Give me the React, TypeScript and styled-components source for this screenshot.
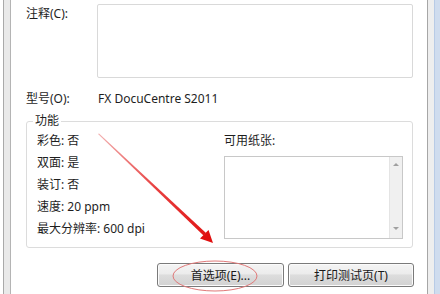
import React from "react";
import styled, { createGlobalStyle } from "styled-components";

const Global = createGlobalStyle`
  html, body { margin: 0; padding: 0; background: #ffffff; }
  body { font-family: "Noto Sans", "Noto Sans CJK SC", sans-serif; font-size: 12px; color: #1e1e1e; }
`;

const Page = styled.div`
  position: relative;
  width: 440px;
  height: 294px;
  overflow: hidden;
  display: flex;
  background: #ffffff;
`;

const LeftFrame = styled.div`
  width: 6px;
  margin-left: 3px;
  border-left: 1px solid #a9a9a9;
  border-right: 1px solid #b4b4b4;
  background: #e9e9e9;
`;

const RightFrame = styled.div`
  width: 12px;
  display: flex;
  border-left: 1px solid #a6a6a6;
`;

const RightInner = styled.div`
  width: 6px;
  background: #eeeeee;
`;

const RightBlue = styled.div`
  flex: 1;
  background: #cfdcee;
  border-left: 1px solid #b8cbe6;
`;

const Content = styled.div`
  flex: 1;
  padding: 4px 14px 0 15px;
  display: flex;
  flex-direction: column;
`;

const FieldRow = styled.div<{ $align?: string }>`
  display: grid;
  grid-template-columns: 71px 1fr;
  align-items: ${(p) => p.$align || "center"};
`;

const Label = styled.div<{ $top?: number }>`
  padding-top: ${(p) => p.$top ?? 0}px;
  white-space: nowrap;
  line-height: 18px;
`;

const TextArea = styled.div`
  height: 72px;
  border: 1px solid #d9d9d9;
  border-radius: 2px;
  background: #ffffff;
`;

const ModelRow = styled(FieldRow)`
  margin-top: 12px;
  height: 18px;
`;

const Value = styled.div`
  padding-left: 1px;
  line-height: 18px;
  white-space: nowrap;
`;

const Group = styled.div`
  position: relative;
  margin-top: 13px;
  padding: 8px 9px 0 10px;
  height: 127px;
  box-sizing: border-box;
  border: 1px solid #dcdcdc;
  border-radius: 3px;
  display: grid;
  grid-template-columns: 187px 1fr;
  align-items: start;
`;

const Legend = styled.div`
  position: absolute;
  top: -8px;
  left: 6px;
  padding: 0 2px;
  line-height: 14px;
  background: #ffffff;
`;

const InfoList = styled.div`
  display: flex;
  flex-direction: column;
`;

const InfoItem = styled.div`
  line-height: 22px;
  white-space: nowrap;
`;

const PaperCol = styled.div`
  display: flex;
  flex-direction: column;
`;

const PaperLabel = styled.div`
  line-height: 22px;
`;

const ListBox = styled.div`
  margin-top: 4px;
  height: 83px;
  box-sizing: border-box;
  border: 1px solid #c8c8c8;
  display: flex;
  justify-content: flex-end;
  background: #ffffff;
`;

const ScrollBar = styled.div`
  width: 13px;
  background: #f0f0f0;
  border-left: 1px solid #e4e4e4;
  display: flex;
  flex-direction: column;
  justify-content: space-between;
  align-items: center;
  padding: 6px 0 8px;
  box-sizing: border-box;
`;

const Arrow = styled.div<{ $down?: boolean }>`
  width: 0;
  height: 0;
  border-left: 3px solid transparent;
  border-right: 3px solid transparent;
  ${(p) =>
    p.$down
      ? "border-top: 3px solid #a0a0a0;"
      : "border-bottom: 3px solid #a0a0a0;"}
`;

const ButtonRow = styled.div`
  display: flex;
  justify-content: flex-end;
  gap: 4px;
  margin-top: 15px;
  margin-right: -1px;
`;

const Button = styled.div<{ $w: number }>`
  width: ${(p) => p.$w}px;
  height: 24px;
  box-sizing: border-box;
  border: 1px solid #7a7a7a;
  border-radius: 3px;
  background: linear-gradient(#f4f4f4 0%, #ececec 45%, #dddddd 50%, #d2d2d2 100%);
  box-shadow: inset 0 0 0 1px #fbfbfb;
  display: flex;
  align-items: center;
  justify-content: center;
  white-space: nowrap;
  color: #1a1a1a;
`;

const Overlay = styled.svg`
  position: absolute;
  left: 0;
  top: 0;
  pointer-events: none;
`;

export default function App() {
  return (
    <>
      <Global />
      <Page>
        <LeftFrame />
        <Content>
          <FieldRow $align="start">
            <Label $top={1}>注释(C):</Label>
            <TextArea />
          </FieldRow>
          <ModelRow>
            <Label>型号(O):</Label>
            <Value>FX DocuCentre S2011</Value>
          </ModelRow>
          <Group>
            <Legend>功能</Legend>
            <InfoList>
              <InfoItem>彩色: 否</InfoItem>
              <InfoItem>双面: 是</InfoItem>
              <InfoItem>装订: 否</InfoItem>
              <InfoItem>速度: 20 ppm</InfoItem>
              <InfoItem>最大分辨率: 600 dpi</InfoItem>
            </InfoList>
            <PaperCol>
              <PaperLabel>可用纸张:</PaperLabel>
              <ListBox>
                <ScrollBar>
                  <Arrow />
                  <Arrow $down />
                </ScrollBar>
              </ListBox>
            </PaperCol>
          </Group>
          <ButtonRow>
            <Button $w={127}>首选项(E)...</Button>
            <Button $w={126}>打印测试页(T)</Button>
          </ButtonRow>
        </Content>
        <RightFrame>
          <RightInner />
          <RightBlue />
        </RightFrame>
        <Overlay width="440" height="294" viewBox="0 0 440 294">
          <defs>
            <linearGradient id="ag" x1="98" y1="134" x2="212" y2="242" gradientUnits="userSpaceOnUse">
              <stop offset="0" stopColor="#f2b0b0" />
              <stop offset="0.5" stopColor="#e84040" />
              <stop offset="1" stopColor="#e01010" />
            </linearGradient>
          </defs>
          <polygon points="98,134 99,133.4 206,233 203.5,235.5" fill="url(#ag)" />
          <polygon points="213,243 200,238.5 208.5,230" fill="#e01010" />
          <ellipse cx="215" cy="276" rx="42" ry="15" fill="none" stroke="#e07878" strokeWidth="1" />
        </Overlay>
      </Page>
    </>
  );
}
